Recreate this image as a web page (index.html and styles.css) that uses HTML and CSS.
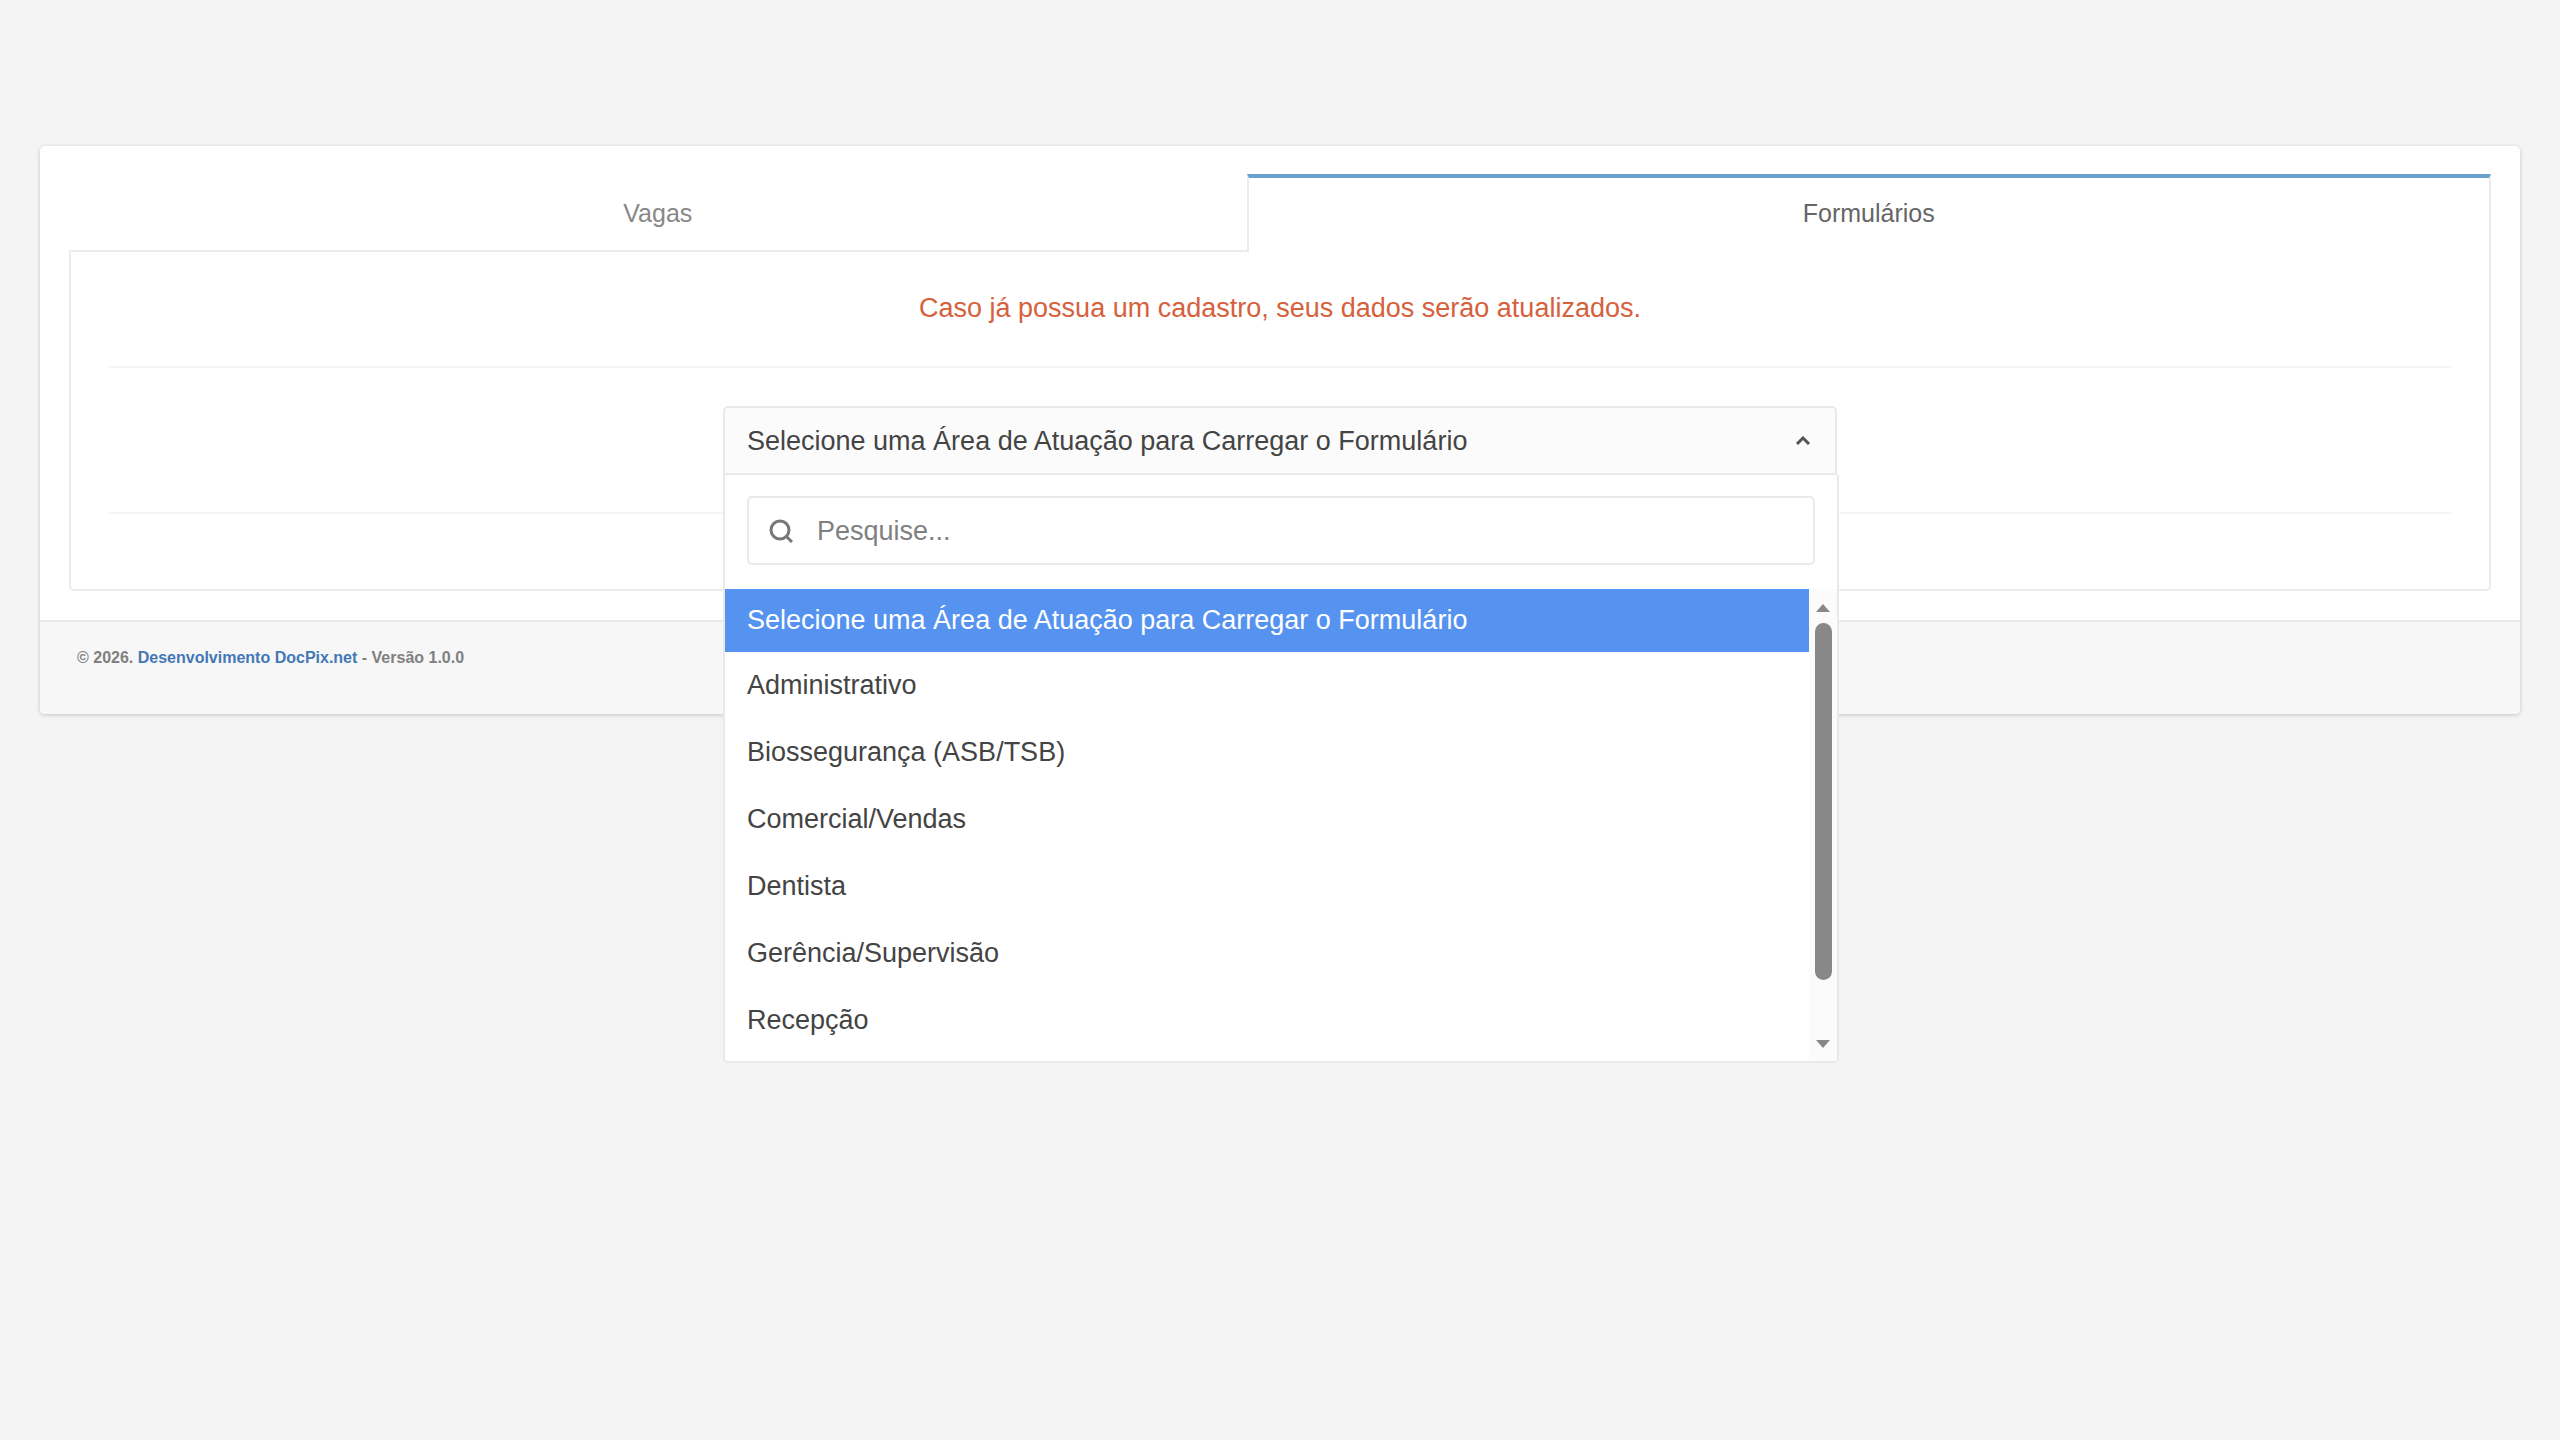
FILE: index.html
```html
<!DOCTYPE html>
<html lang="pt-BR">
<head>
    <meta charset="UTF-8">
    <meta name="viewport" content="width=device-width, initial-scale=1.0">
    <title>Formulários</title>
    <link rel="stylesheet" href="styles.css">
</head>
<body>
    <div class="card">
        <main class="card-body">
            <div class="tabs" role="tablist">
                <button type="button" class="tab" role="tab" aria-selected="false">Vagas</button>
                <button type="button" class="tab active" role="tab" aria-selected="true" aria-controls="formularios">Formulários</button>
            </div>
            <div class="tab-content" id="formularios" role="tabpanel">
                <p class="notice">Caso já possua um cadastro, seus dados serão atualizados.</p>
                <hr>
                <div class="dropdown">
                    <button type="button" class="dropdown-toggle" aria-haspopup="listbox" aria-expanded="true" aria-controls="areas">
                        <span>Selecione uma Área de Atuação para Carregar o Formulário</span>
                        <svg class="chevron" viewBox="0 0 16 10" aria-hidden="true"><path d="M2 8l6-6 6 6"/></svg>
                    </button>
                    <div class="dropdown-menu">
                        <label class="search">
                            <svg class="search-icon" viewBox="0 0 24 24" aria-hidden="true"><circle cx="11" cy="11" r="9"/><path d="M17 17l6 6"/></svg>
                            <input type="text" placeholder="Pesquise..." aria-label="Pesquise">
                        </label>
                        <div class="list-wrap">
                            <ul class="options" id="areas" role="listbox">
                                <li class="option selected" role="option" aria-selected="true">Selecione uma Área de Atuação para Carregar o Formulário</li>
                                <li class="option" role="option">Administrativo</li>
                                <li class="option" role="option">Biossegurança (ASB/TSB)</li>
                                <li class="option" role="option">Comercial/Vendas</li>
                                <li class="option" role="option">Dentista</li>
                                <li class="option" role="option">Gerência/Supervisão</li>
                                <li class="option" role="option">Recepção</li>
                            </ul>
                            <div class="scrollbar" aria-hidden="true">
                                <svg class="arrow" viewBox="0 0 14 8"><path d="M7 0l7 8H0z"/></svg>
                                <div class="track"><div class="thumb"></div></div>
                                <svg class="arrow" viewBox="0 0 14 8"><path d="M0 0h14L7 8z"/></svg>
                            </div>
                        </div>
                    </div>
                </div>
                <hr>
            </div>
        </main>
        <footer class="card-footer">© 2026. <a href="#">Desenvolvimento DocPix.net</a> - Versão 1.0.0</footer>
    </div>
</body>
</html>
```

FILE: styles.css
```css
* {
    box-sizing: border-box;
}
body {
    font-family: "Liberation Sans", Arial, sans-serif;
    font-size: 27px;
    line-height: 32px;
    color: #444;
    background-color: #f4f4f4;
    min-height: 100vh;
    margin: 0;
    padding: 146px 40px 40px;
}
button, input {
    font: inherit;
    color: inherit;
}
.card {
    background: white;
    border-radius: 5px;
    box-shadow: 0 1px 4px rgba(0, 0, 0, 0.2);
}
.card-body {
    padding: 28px 29px 29px;
}

/* tabs */
.tabs {
    display: flex;
}
.tab {
    flex: 1 1 auto;
    height: 78px;
    padding: 2px 0 0;
    font-size: 25px;
    color: #888;
    background: white;
    border: 0;
    border-bottom: 2px solid #ececec;
}
.tab.active {
    padding: 0 0 4px;
    color: #666;
    border: 2px solid #ececec;
    border-top: 4px solid #69a2cd;
    border-bottom: 0;
}
.tab-content {
    padding: 40px 38px 75px;
    border: 2px solid #ececec;
    border-top: 0;
    border-radius: 0 0 5px 5px;
}
.notice {
    margin: 0 0 42px;
    text-align: center;
    color: #d5613d;
}
hr {
    margin: 0;
    border: 0;
    border-top: 2px solid #f5f5f5;
}

/* dropdown */
.dropdown {
    position: relative;
    width: 100%;
    max-width: 1114px;
    margin: 38px auto 37px;
}
.dropdown-toggle {
    display: flex;
    align-items: center;
    justify-content: space-between;
    width: 100%;
    height: 69px;
    padding: 0 24px 0 22px;
    text-align: left;
    background: #fbfbfb;
    border: 2px solid #e9e9e9;
    border-radius: 5px 5px 0 0;
}
.chevron {
    width: 16px;
    height: 10px;
    fill: none;
    stroke: #555;
    stroke-width: 3;
}
.dropdown-menu {
    position: absolute;
    top: 100%;
    left: 0;
    right: -2px;
    background: white;
    border: 2px solid #e9e9e9;
    border-top: 0;
    border-radius: 0 0 5px 5px;
}
.search {
    display: flex;
    align-items: center;
    gap: 24px;
    height: 69px;
    margin: 21px 22px 24px;
    padding: 0 20px;
    border: 2px solid #e9e9e9;
    border-radius: 5px;
}
.search-icon {
    flex: none;
    width: 24px;
    height: 24px;
    fill: none;
    stroke: #777;
    stroke-width: 3;
}
.search input {
    flex: 1;
    min-width: 0;
    padding: 0;
    border: 0;
    outline: 0;
    background: none;
}
.search input::placeholder {
    color: #808080;
    opacity: 1;
}
.list-wrap {
    display: flex;
}
.options {
    flex: 1;
    margin: 0;
    padding: 0 0 7px;
    list-style: none;
}
.option {
    padding: 17px 22px 18px;
}
.option.selected {
    padding: 15px 22px 16px;
    color: white;
    background: #5693f0;
}
.scrollbar {
    display: flex;
    flex-direction: column;
    align-items: center;
    width: 28px;
    padding: 15px 0 13px;
    background: #fbfbfb;
}
.arrow {
    width: 14px;
    height: 8px;
    fill: #888;
}
.track {
    flex: 1;
    width: 17px;
    padding: 11px 0 60px;
}
.thumb {
    height: 100%;
    background: #888;
    border-radius: 9px;
}

/* footer */
.card-footer {
    padding: 20px 37px 40px;
    font-size: 16px;
    font-weight: bold;
    color: #808080;
    background: #f7f7f7;
    border-top: 2px solid #e9e9e9;
    border-radius: 0 0 5px 5px;
}
.card-footer a {
    color: #4477b5;
    text-decoration: none;
}
```
